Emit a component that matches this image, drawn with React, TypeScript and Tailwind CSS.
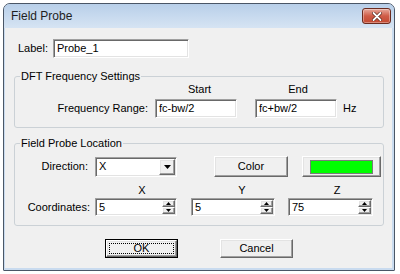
import React from "react";

const sunken =
  "bg-white border border-t-[#a0a0a0] border-l-[#a0a0a0] border-r-white border-b-white shadow-[inset_1px_1px_0_#696969,inset_-1px_-1px_0_#e3e3e3]";
const raised =
  "bg-[#f0f0f0] border border-t-white border-l-white border-r-[#696969] border-b-[#696969] shadow-[inset_-1px_-1px_0_#a0a0a0,inset_1px_1px_0_#e3e3e3]";

function TextBox({ value, w }: { value: string; w: string }) {
  return (
    <div className={`${sunken} ${w} h-[19px] flex items-center pl-[3px] leading-[13px]`}>
      {value}
    </div>
  );
}

function SpinBox({ value, w }: { value: string; w: string }) {
  return (
    <div className={`${sunken} ${w} h-[18px] flex items-stretch p-[1px]`}>
      <div className="flex-1 flex items-center pl-[2px] leading-[13px]">{value}</div>
      <div className="w-[13px] flex flex-col">
        <div className={`${raised} flex-1 flex items-center justify-center`}>
          <svg width="5" height="3" viewBox="0 0 5 3">
            <path d="M2.5 0 L5 3 L0 3 Z" fill="#000" />
          </svg>
        </div>
        <div className={`${raised} flex-1 flex items-center justify-center`}>
          <svg width="5" height="3" viewBox="0 0 5 3">
            <path d="M0 0 L5 0 L2.5 3 Z" fill="#000" />
          </svg>
        </div>
      </div>
    </div>
  );
}

export default function App() {
  return (
    <div className="w-[400px] h-[274px] bg-white pt-[3px] pl-[3px] font-['Liberation_Sans',Arial,sans-serif] text-[11px] text-black overflow-hidden">
      <div className="w-[392px] h-[268px] border border-[#4a5666] rounded-t-[7px] rounded-b-[1px] bg-[#c9dbef] flex flex-col overflow-hidden">
        {/* Title bar */}
        <div className="h-[24px] flex items-center justify-between pl-[7px] pr-[3px] bg-linear-to-b from-[#b8cfe9] to-[#d6e4f3]">
          <span className="text-[12px] leading-[14px] text-[#1e1e1e]">Field Probe</span>
          <div className="w-[29px] h-[16px] rounded-[3px] border border-[#6b2c20] bg-linear-to-b from-[#e6a89c] via-[#cf5c47] to-[#c34a32] flex items-center justify-center shadow-[inset_0_0_0_1px_rgba(255,255,255,0.35)]">
            <svg width="10" height="9" viewBox="0 0 10 9">
              <path
                d="M1.5 1 L8.5 8 M8.5 1 L1.5 8"
                stroke="#5a2418"
                strokeWidth="3.2"
                strokeLinecap="round"
              />
              <path
                d="M1.5 1 L8.5 8 M8.5 1 L1.5 8"
                stroke="#ffffff"
                strokeWidth="1.8"
                strokeLinecap="round"
              />
            </svg>
          </div>
        </div>

        {/* Client */}
        <div className="flex-1 bg-[#f0f0f0] ml-[1px] mr-[2px] mb-[2px] flex flex-col">
          {/* Label row */}
          <div className="flex items-center mt-[11px] ml-[13px] h-[19px]">
            <span className="w-[35px] leading-[13px]">Label:</span>
            <TextBox value="Probe_1" w="w-[136px]" />
          </div>

          {/* DFT Frequency Settings */}
          <fieldset className="mt-[12px] ml-[9px] w-[370px] border border-[#cbd1d6] rounded-[3px] pb-[9px]">
            <legend className="ml-[5px] px-[1px] leading-[13px]">DFT Frequency Settings</legend>
            <div className="flex h-[13px] leading-[13px]">
              <div className="w-[140px]" />
              <div className="w-[82px] pl-[7px] text-center">Start</div>
              <div className="w-[18px]" />
              <div className="w-[82px] pl-[4px] text-center">End</div>
            </div>
            <div className="flex items-center mt-[3px]">
              <span className="w-[133px] text-right mr-[7px] leading-[13px]">Frequency Range:</span>
              <TextBox value="fc-bw/2" w="w-[82px]" />
              <div className="ml-[18px]">
                <TextBox value="fc+bw/2" w="w-[82px]" />
              </div>
              <span className="ml-[6px] leading-[13px]">Hz</span>
            </div>
          </fieldset>

          {/* Field Probe Location */}
          <fieldset className="mt-[9px] ml-[9px] w-[370px] border border-[#cbd1d6] rounded-[3px] pb-[9px]">
            <legend className="ml-[5px] px-[1px] leading-[13px]">Field Probe Location</legend>
            <div className="flex items-center mt-[6px] h-[21px]">
              <span className="w-[73px] text-right mr-[7px] leading-[13px]">Direction:</span>
              <div className={`${sunken} w-[82px] h-[20px] flex items-stretch p-[1px]`}>
                <div className="flex-1 flex items-center pl-[2px] leading-[13px]">X</div>
                <div className={`${raised} w-[16px] flex items-center justify-center`}>
                  <svg width="7" height="4" viewBox="0 0 7 4">
                    <path d="M0 0 L7 0 L3.5 4 Z" fill="#000" />
                  </svg>
                </div>
              </div>
              <div className={`${raised} ml-[37px] w-[74px] h-[21px] flex items-center justify-center leading-[13px]`}>
                Color
              </div>
              <div className={`${raised} ml-[14px] w-[79px] h-[21px] flex items-center justify-center`}>
                <div className="w-[63px] h-[14px] bg-[#00ff00] border border-[#7a7a7a]" />
              </div>
            </div>
            <div className="flex mt-[7px] h-[13px] leading-[13px]">
              <div className="ml-[117px] w-[20px] text-center">X</div>
              <div className="ml-[80px] w-[20px] text-center">Y</div>
              <div className="ml-[75px] w-[20px] text-center">Z</div>
            </div>
            <div className="flex items-center mt-[1px] h-[18px]">
              <span className="w-[75px] text-right mr-[5px] leading-[13px]">Coordinates:</span>
              <SpinBox value="5" w="w-[82px]" />
              <div className="ml-[14px]">
                <SpinBox value="5" w="w-[84px]" />
              </div>
              <div className="ml-[13px]">
                <SpinBox value="75" w="w-[85px]" />
              </div>
            </div>
          </fieldset>

          {/* Buttons */}
          <div className="flex mt-[13px] ml-[100px]">
            <div className="w-[73px] h-[19px] border border-black flex">
              <div className={`${raised} flex-1 flex p-[2px]`}>
                <div className="flex-1 border border-dotted border-black flex items-center justify-center leading-[13px]">
                  OK
                </div>
              </div>
            </div>
            <div className={`${raised} ml-[42px] w-[73px] h-[19px] flex items-center justify-center leading-[13px]`}>
              Cancel
            </div>
          </div>
        </div>
      </div>
    </div>
  );
}
